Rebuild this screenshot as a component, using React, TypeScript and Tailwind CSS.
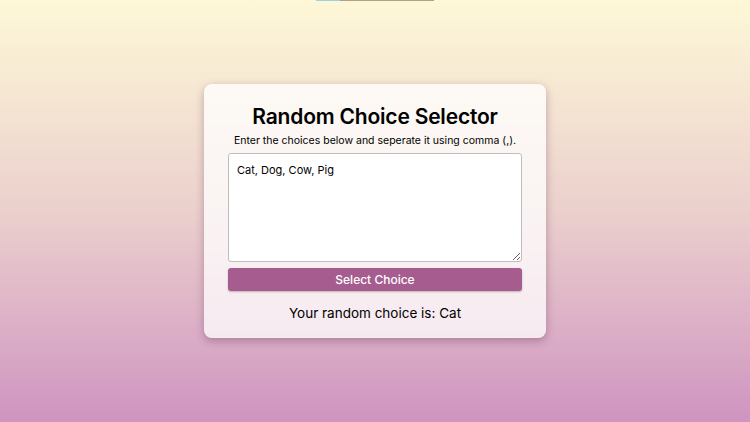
import { useState } from 'react';

export default function App() {
  const [choices, setChoices] = useState('Cat, Dog, Cow, Pig');
  const [result, setResult] = useState('Cat');

  const pick = () => {
    const list = choices.split(',').map((c) => c.trim()).filter(Boolean);
    if (list.length) setResult(list[Math.floor(Math.random() * list.length)]);
  };

  return (
    <div
      className="relative min-h-screen h-[422px] flex items-center justify-center bg-gradient-to-b from-[#fef8d7] via-[#ebd0cd] to-[#cf94c0]"
      style={{ fontFamily: 'Inter, "Noto Sans", sans-serif' }}
    >
      {/* thin progress strip at the very top */}
      <div className="absolute top-0 left-[316px] w-[118px] h-px flex">
        <div className="w-[24px] bg-[#9fcfe2]" />
        <div className="flex-1 bg-[#a9a489]" />
      </div>

      <div className="w-[342px] rounded-lg bg-white/75 shadow-[0_3px_8px_rgba(80,40,70,0.35)] px-6 pt-[20px] pb-[16px] flex flex-col items-center">
        <h1 className="text-[21px] leading-[26px] font-semibold text-black tracking-[-0.2px]">
          Random Choice Selector
        </h1>
        <p className="mt-[4px] text-[10.5px] leading-[14px] text-black">
          Enter the choices below and seperate it using comma (,).
        </p>
        <textarea
          value={choices}
          onChange={(e) => setChoices(e.target.value)}
          className="mt-[5px] w-full h-[109px] rounded-[3px] border border-[#c2bcbf] bg-white px-[8px] py-[8px] text-[11px] leading-[16px] text-black outline-none"
        />
        <button
          onClick={pick}
          className="mt-[6px] w-full h-[23px] rounded-[3px] bg-[#a65c8e] text-white text-[12px] font-medium shadow-[0_1px_2px_rgba(0,0,0,0.25)]"
        >
          Select Choice
        </button>
        <p className="mt-[13px] text-[13.5px] leading-[18px] text-black">
          Your random choice is: {result}
        </p>
      </div>
    </div>
  );
}
